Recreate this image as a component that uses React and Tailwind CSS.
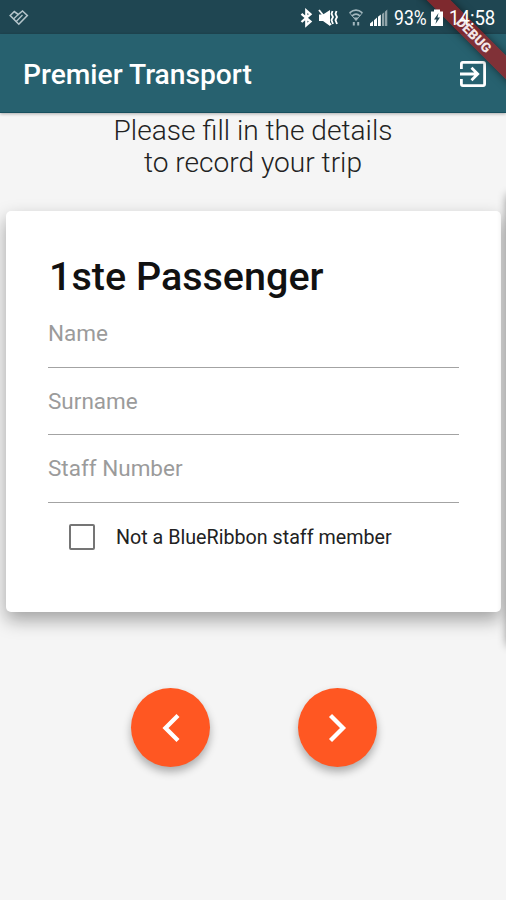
import { useState } from "react";

function StatusBar() {
  return (
    <div className="flex h-[34px] items-center bg-[#1f4652] pt-[2px] text-white">
      <svg className="ml-[9px] h-[18px] w-[20px] text-[#b4c4ca]" viewBox="0 0 20 18" fill="none" stroke="currentColor" strokeWidth="1.6">
        <path d="M1.200 6.500 5.300 2.500 9.200 5.500 13.500 2 18.300 6.500 9.800 15.200z" />
        <path d="M4.500 10 9.200 5.500M7 12.800 13.500 6" strokeWidth="1.300" />
      </svg>

      <svg className="ml-[271px] h-[20px] w-[13px]" viewBox="0 0 13 20" fill="none" stroke="currentColor" strokeWidth="2.300">
        <path d="M1.500 5.800 10.500 13.600 6.300 17.200V2.500L10.500 6.200 1.500 14" />
      </svg>
      <svg className="ml-[5px] h-[20px] w-[21px]" viewBox="0 0 21 20" fill="none" stroke="currentColor" strokeWidth="1.800">
        <path d="M1 6.500h4l7-4.500v16l-7-5H1z" fill="currentColor" stroke="none" />
        <path d="M1 2 13 17" />
        <path d="M14.500 3 13.500 6l1.500 3-1.500 3 1.500 4M18.500 3 17.500 6l1.500 3-1.500 3 1.500 4" strokeWidth="1.800" />
      </svg>
      <svg className="ml-[10px] h-[20px] w-[14px] text-[#a3b7be]" viewBox="0 0 14 20" fill="none" stroke="currentColor" strokeWidth="1.600">
        <path d="M0.600 4.800Q7 -0.500 13.400 4.800M2.800 8Q7 4.200 11.200 8" />
        <path d="M0.600 4.800 7 12.500 13.400 4.800" strokeWidth="0.900" />
        <path d="M4.500 9.500h5L7 12.800z" fill="currentColor" stroke="none" />
        <path d="M4.800 14v3.500M9.200 14v3.500" strokeWidth="2" />
      </svg>
      <svg className="ml-[7px] h-[18px] w-[18px]" viewBox="0 0 18 18" fill="currentColor">
        <path d="M0 14.500 3 12v5H0zM4 11.200 7 8.500V17H4zM8 7.800 10.800 5.500V17H8z" />
        <path d="M12 5 14.300 3.200V17H12zM15 2.500 17.300 0.500V17H15z" opacity=".5" />
      </svg>
      <span className="ml-[6px] w-[34px] origin-left scale-x-[0.88] whitespace-nowrap text-[20px] leading-none">93%</span>
      <svg className="relative z-30 ml-[3px] h-[18px] w-[12px]" viewBox="0 0 12 18">
        <path d="M0 2.500h3V0.500h6v2h3V17H0z" fill="#fff" />
        <path d="M7.500 4 3 10.500h2.500L4.500 15 9 8.500H6.500z" fill="#1f4652" />
      </svg>
      <span className="relative z-30 ml-[6px] origin-left scale-x-[0.93] whitespace-nowrap text-[20px] leading-none">14:58</span>
    </div>
  );
}

function AppBar() {
  return (
    <header className="relative z-10 flex h-[79px] items-center justify-between border-b border-[#174f5e] bg-[#27616f] pl-[23px] pr-[19px] shadow-[0_1px_3px_rgba(0,0,0,0.3)]">
      <h1 className="pt-[4px] text-[28.200px] font-medium leading-none text-white">Premier Transport</h1>
      <svg className="mt-[2px] h-[28px] w-[28px] text-white" viewBox="0 0 28 28" fill="none" stroke="currentColor" strokeWidth="2.800">
        <path d="M2.400 9V3.900Q2.400 2.400 3.900 2.400H24.100Q25.600 2.400 25.600 3.900V24.100Q25.600 25.600 24.100 25.600H3.900Q2.400 25.600 2.400 24.100V19" />
        <path d="M1 14H18M12.500 7.800 18.700 14 12.500 20.200" />
      </svg>
    </header>
  );
}

function DebugBanner() {
  return (
    <div className="pointer-events-none absolute right-0 top-0 z-20 h-[90px] w-[90px] overflow-hidden">
      <div className="absolute left-[-13px] top-[26px] flex h-[17px] w-[140px] rotate-45 items-center justify-center bg-[#a71c20]/70 pl-[2px] text-[13.500px] font-black leading-none text-[#f3e6e8] shadow-[0_0_8px_rgba(0,0,0,0.5)]">
        DEBUG
      </div>
    </div>
  );
}

function Field({ label, value, onChange }) {
  return (
    <input
      className="block h-[67.500px] w-full border-b-[1.500px] border-[#a3a3a3] bg-transparent text-[22.500px] outline-none placeholder:text-[#9b9b9b]"
      placeholder={label}
      value={value}
      onChange={(e) => onChange(e.target.value)}
    />
  );
}

function RoundButton({ label, children }) {
  return (
    <button
      aria-label={label}
      className="flex h-[79px] w-[79px] items-center justify-center rounded-full bg-[#ff5722] text-white shadow-[0_5px_9px_rgba(0,0,0,0.3)]"
    >
      <svg className="h-[34px] w-[34px]" viewBox="0 0 34 34" fill="none" stroke="currentColor" strokeWidth="4.300">
        {children}
      </svg>
    </button>
  );
}

export default function App() {
  const [name, setName] = useState("");
  const [surname, setSurname] = useState("");
  const [staffNumber, setStaffNumber] = useState("");
  const [notStaff, setNotStaff] = useState(false);

  return (
    <div className="relative h-[900px] w-[506px] overflow-hidden bg-[#f5f5f5] font-['Roboto',sans-serif]">
      <StatusBar />
      <AppBar />
      <DebugBanner />

      <p className="mt-[2px] text-center text-[28.100px] font-light leading-[32px] text-[#222]">
        Please fill in the details
        <br />
        to record your trip
      </p>

      {/* Passenger card, the next page's card casts its shadow at the right edge */}
      <div className="mt-[32px] flex h-[401px]">
        <main className="relative ml-[6px] h-[401px] w-[495px] shrink-0 rounded-[5px] bg-white px-[42px] pt-[43px] shadow-[0_8px_18px_rgba(0,0,0,0.34)]">
          <h2 className="pl-px text-[39.500px] font-medium leading-[46px] text-[#111]">1ste Passenger</h2>
          <div className="w-[411px]">
            <Field label="Name" value={name} onChange={setName} />
            <Field label="Surname" value={surname} onChange={setSurname} />
            <Field label="Staff Number" value={staffNumber} onChange={setStaffNumber} />
          </div>
          <label className="flex h-[68px] items-center pl-[21px]">
            <input
              type="checkbox"
              className="h-[26px] w-[26px] appearance-none rounded-[2px] border-[2.500px] border-[#757575] checked:bg-[#757575]"
              checked={notStaff}
              onChange={(e) => setNotStaff(e.target.checked)}
            />
            <span className="ml-[21px] pt-[2px] text-[19.700px] text-[#222]">Not a BlueRibbon staff member</span>
          </label>
        </main>
        <div className="ml-[6px] h-[450px] w-[20px] shrink-0 -translate-y-[16px] shadow-[0_0_10px_rgba(0,0,0,0.45)]" />
      </div>

      <div className="mt-[76px] flex gap-[88px] pl-[131px]">
        <RoundButton label="Previous">
          <path d="M24 4.500 11.500 17 24 29.500" />
        </RoundButton>
        <RoundButton label="Next">
          <path d="M9.500 4.500 22 17 9.500 29.500" />
        </RoundButton>
      </div>
    </div>
  );
}
